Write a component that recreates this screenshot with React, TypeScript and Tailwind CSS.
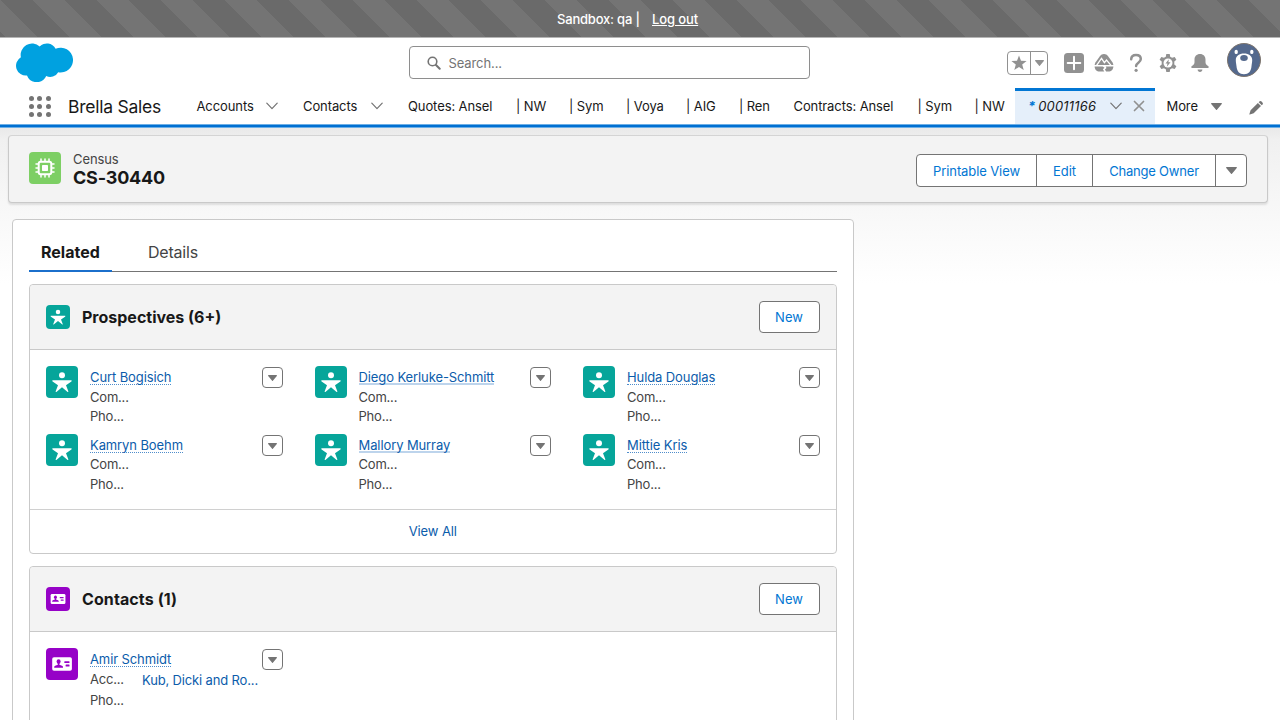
import React from "react";

function Caret({ className }: { className: string }) {
  return (
    <svg viewBox="0 0 10 6" preserveAspectRatio="none" className={className} fill="currentColor">
      <path d="M.6 0h8.800c.5 0 .7.5.4.9L5.400 5.700c-.2.3-.6.3-.8 0L.2.9C-.1.500.1 0 .6 0z" />
    </svg>
  );
}

function Chevron() {
  return (
    <svg viewBox="0 0 12 8" className="h-2 w-3 shrink-0" fill="none" stroke="#747474" strokeWidth="1.2" strokeLinecap="round" strokeLinejoin="round">
      <path d="M.8 1.200 6 6.600l5.200-5.400" />
    </svg>
  );
}

function PersonGlyph({ className }: { className: string }) {
  return (
    <svg viewBox="0 0 32 32" className={className} fill="#fff">
      <circle cx="16" cy="9.2" r="3" />
      <path d="M6.900 14.300h18.200c.8 0 .9.8.3 1.200l-5.400 3.700 2.300 6c.3.700-.5 1.100-1 .6L16 21.200l-5.300 4.600c-.5.500-1.300.1-1-.6l2.300-6-5.400-3.700c-.6-.4-.5-1.200.3-1.200z" />
    </svg>
  );
}

function CardGlyph({ className }: { className: string }) {
  return (
    <svg viewBox="0 0 32 32" className={className}>
      <rect x="6.2" y="9.2" width="19.7" height="13.6" rx="1.8" fill="#fff" />
      <g fill="#9602c7">
        <ellipse cx="12.6" cy="13.6" rx="2" ry="2.3" />
        <path d="M11.800 15h1.600v1.700l2.600 1c.7.300 1 .8 1 1.400v.6H8.200v-.6c0-.6.300-1.100 1-1.400l2.600-1z" />
        <rect x="18.3" y="13.2" width="5.2" height="1.8" rx=".5" />
        <rect x="19.6" y="16.6" width="3.9" height="1.8" rx=".5" />
      </g>
    </svg>
  );
}

function RowMenu() {
  return (
    <button className="flex h-[21px] w-[21px] shrink-0 items-center justify-center rounded-[4px] border border-[#747474] bg-white text-[#747474]">
      <Caret className="h-[6px] w-[9px]" />
    </button>
  );
}

type RecordProps = { name: string; second: string; lines: string; account?: string; contact?: boolean; solid?: boolean };

function RecordTile({ name, second, lines, account, contact, solid }: RecordProps) {
  return (
    <div className="flex min-w-0 items-start">
      <span className={`h-8 w-8 shrink-0 rounded-[4px] ${contact ? "bg-[#9602c7]" : "bg-[#06a59a]"}`}>
        {contact ? <CardGlyph className="h-8 w-8" /> : <PersonGlyph className="h-8 w-8" />}
      </span>
      <div className="ml-3 flex min-w-0 flex-1 flex-col pt-1">
        <a className={`w-fit leading-[14px] whitespace-nowrap text-[#0b5cab] ${solid ? "h-[15px] border-b-2 border-[#bdd4ec]" : "h-[15px] border-b border-dotted border-[#4f8dcb]"}`}>{name}</a>
        <div className={`flex flex-col tracking-[-0.2px] ${lines}`}>
          <div className="flex leading-[19px]">
            <span className="w-[52px]">{second}</span>
            {account && <a className="relative top-px tracking-[-0.15px] whitespace-nowrap text-[#0b5cab]">{account}</a>}
          </div>
          <div className="leading-[19px]">Pho...</div>
        </div>
      </div>
      <div className="pt-px">
        <RowMenu />
      </div>
    </div>
  );
}

function ListHeader({ title, contact }: { title: string; contact?: boolean }) {
  return (
    <div className="flex h-[65px] items-center rounded-t-[4px] border-b border-[#c9c9c9] bg-[#f3f3f3] px-4">
      <span className={`h-6 w-6 rounded-[4px] ${contact ? "bg-[#9602c7]" : "bg-[#06a59a]"}`}>
        {contact ? <CardGlyph className="h-6 w-6" /> : <PersonGlyph className="h-6 w-6" />}
      </span>
      <h2 className={`ml-3 flex-1 text-[16px] font-bold text-[#181818] ${contact ? "tracking-[0.1px]" : "tracking-normal"}`}>{title}</h2>
      <button className="h-8 w-[61px] rounded-[4px] border border-[#747474] bg-white pt-[2px] tracking-normal text-[#0176d3]">New</button>
    </div>
  );
}

const navItems = [
  { label: "Quotes: Ansel", box: "w-[108px]" },
  { label: "| NW", box: "w-[53px]" },
  { label: "| Sym", box: "w-[57px]" },
  { label: "| Voya", box: "w-[60px]" },
  { label: "| AIG", box: "w-[53px]" },
  { label: "| Ren", box: "w-[54.5px]" },
  { label: "Contracts: Ansel", box: "w-[124px]" },
  { label: "| Sym", box: "w-[57px]" },
  { label: "| NW", box: "w-[40.5px]" },
];

function HeaderIcons() {
  return (
    <div className="flex items-center text-[#919191]">
      <div className="flex h-6 w-[41px] rounded-[4px] border border-[#919191]">
        <span className="flex w-[23px] items-center justify-center border-r border-[#919191]">
          <svg viewBox="0 0 16 16" className="h-4 w-4" fill="currentColor">
            <path d="m8 .5 2 5.300 5.600.2-4.400 3.500 1.500 5.500L8 11.900 3.300 15l1.500-5.500L.4 6 6 5.800z" />
          </svg>
        </span>
        <span className="flex flex-1 items-center justify-center">
          <Caret className="h-[6px] w-[9px]" />
        </span>
      </div>
      <svg viewBox="0 0 20 20" className="ml-4 h-5 w-5">
        <rect width="20" height="20" rx="3.500" fill="currentColor" />
        <path d="M10 3.700v12.600M3.700 10h12.600" stroke="#fff" strokeWidth="2" strokeLinecap="round" />
      </svg>
      <svg viewBox="0 0 20 20" className="ml-[10px] h-5 w-5">
        <path d="M10 1c1.700 0 3.100.8 4.100 2.200l4.300 6.100c.5.800.8 1.600 1 2.700H.6c.2-1.100.5-1.900 1-2.700l4.300-6.100C6.900 1.800 8.300 1 10 1z" fill="currentColor" />
        <path d="M.6 13.400h8.200l1.700 1.300-1.600 1.500 1.400 2.400H5.600C2.700 18.600.7 16.500.6 13.400zM11.700 13.400h7.700c-.1 3.100-2.100 5.200-5 5.200h-2.300l-1.200-2.200 1.600-1.500z" fill="currentColor" />
        <path d="m2.600 12.300 4.900-7 2.900 4.400 2.100-2.700 4.500 5.300" fill="none" stroke="#fff" strokeWidth="1.300" />
      </svg>
      <svg viewBox="0 0 14 20" className="ml-[15px] h-5 w-[14px]" fill="none">
        <path d="M2.200 6.300C2.300 3.400 4.200 2 7 2c2.900 0 4.800 1.600 4.800 4.100 0 3.800-4.700 3.400-4.700 7" stroke="currentColor" strokeWidth="2.500" strokeLinecap="round" />
        <circle cx="7.100" cy="17.300" r="1.600" fill="currentColor" />
      </svg>
      <svg viewBox="0 0 20 20" className="ml-[15px] h-5 w-5">
        <path fill="currentColor" d="M8.300 1h3.400l.5 2.700 1.900 1.100 2.600-.9 1.700 2.900-2.100 1.800v2.800l2.100 1.800-1.700 2.900-2.600-.9-1.900 1.100-.5 2.700H8.300l-.5-2.700-1.900-1.100-2.600.9-1.700-2.900 2.100-1.800V8.600L1.600 6.800l1.700-2.900 2.600.9 1.900-1.100z" />
        <circle cx="10" cy="10" r="4.500" fill="#fff" />
        <path d="M10.800 6.300 7.500 10.400h2l-.7 3.400 3.700-4.500h-2.100z" fill="currentColor" />
      </svg>
      <svg viewBox="0 0 20 20" className="ml-3 h-5 w-5" fill="currentColor">
        <path d="M10 1c3.400 0 5.500 2.400 5.500 5.600v2.700c0 1.700.8 2.500 2.200 3.400.7.400 1 .8 1 1.300 0 .7-.4 1-1 1H2.300c-.6 0-1-.3-1-1 0-.5.300-.9 1-1.300 1.400-.9 2.200-1.700 2.200-3.400V6.600C4.500 3.400 6.600 1 10 1zM7.600 16.400h4.800c0 1.500-1 2.500-2.400 2.500s-2.400-1-2.400-2.500z" />
      </svg>
    </div>
  );
}

export default function App() {
  return (
    <div className="h-[720px] w-[1280px] overflow-hidden bg-white font-['Inter',sans-serif] text-[13px] tracking-[-0.1px] text-[#444]">
      <div className="flex h-[38px] items-center border-b border-[#b5b5b5] bg-[#747474] bg-[linear-gradient(45deg,#6a6a6a_25%,#747474_25%,#747474_50%,#6a6a6a_50%,#6a6a6a_75%,#747474_75%)] bg-[length:64px_64px] pt-[2px] pl-[557px] font-medium text-white">
        <span className="w-[95px] tracking-[-0.2px]">Sandbox: qa |</span>
        <a className="underline">Log out</a>
      </div>

      <header className="bg-white">
        <div className="flex h-[50px] items-start">
          <svg viewBox="0 0 57 40" className="mt-1 ml-4 h-10 w-[57px]" fill="#00a1e0">
            <path d="M23.700 4.500a10 10 0 0 1 15.900 2.200A12.400 12.400 0 1 1 42.200 30.200a9 9 0 0 1-12 3.800 10.400 10.400 0 0 1-19.200-.5A9.800 9.800 0 0 1 4.900 15.300 11.400 11.400 0 0 1 23.700 4.500z" />
          </svg>
          <div className="mt-2 ml-[336px] flex h-[33px] w-[401px] items-center rounded-[4px] border border-[#8e8e8e] pl-[17px] text-[#747474]">
            <svg viewBox="0 0 14 14" className="mt-px h-[14px] w-[14px]" fill="none" stroke="#747474" strokeLinecap="round">
              <circle cx="5.500" cy="5.500" r="4.300" strokeWidth="1.600" />
              <path d="m9 9 3.700 3.700" strokeWidth="2" />
            </svg>
            <span className="ml-[7.5px] pt-[2px]">Search...</span>
          </div>
          <div className="mt-[13px] ml-[197px]">
            <HeaderIcons />
          </div>
          <svg viewBox="0 0 34 34" className="mt-[5px] ml-[17px] h-[34px] w-[34px]">
            <circle cx="17" cy="17" r="16.500" fill="#54698d" stroke="#7d746c" />
            <path d="M7.600 8.300a1.600 1.600 0 0 1 3.200 0v1.200a1.600 1.600 0 0 1-3.200 0zM23.200 8.300a1.600 1.600 0 0 1 3.200 0v1.200a1.600 1.600 0 0 1-3.200 0z" fill="#fff" />
            <path d="M17 10.500c4.800 0 8.200 2.600 8.200 6.400 0 2.300-.5 4.200-.7 6.400-.4 5-2.900 8-7.500 8s-7.100-3-7.500-8c-.2-2.200-.7-4.100-.7-6.400 0-3.800 3.400-6.400 8.200-6.400z" fill="#fff" />
            <ellipse cx="17" cy="15" rx="3.800" ry="2.900" fill="#54698d" />
          </svg>
        </div>

        <nav className="flex h-[36px] items-center text-[#181818]">
          <div className="ml-[29px] grid w-[22px] grid-cols-3 gap-[3px]">
            {Array.from({ length: 9 }, (_, i) => (
              <span key={i} className="h-[5px] w-[5px] rounded-full bg-[#747474]" />
            ))}
          </div>
          <span className="ml-[17px] w-[128.500px] pt-[2px] text-[17.500px] tracking-[-0.250px] whitespace-nowrap">Brella Sales</span>
          <span className="w-[69.500px] pt-[2px]">Accounts</span>
          <Chevron />
          <span className="ml-[25px] w-[68px] pt-[2px]">Contacts</span>
          <Chevron />
          <div className="ml-[25px] flex pt-[2px]">
            {navItems.map((n, i) => (
              <span key={i} className={`whitespace-nowrap ${n.box}`}>{n.label}</span>
            ))}
          </div>
          <div className="flex h-full w-[139.500px] shrink-0 items-center border-t-[3px] border-[#0176d3] bg-[#e5effa] pb-[3px] pl-[13px]">
            <span className="pt-[2px] font-bold text-[#0176d3] italic">*</span>
            <span className="ml-[3px] w-[71.500px] pt-[2px] tracking-[0.200px] italic">00011166</span>
            <Chevron />
            <svg viewBox="0 0 12 12" className="ml-[11px] h-3 w-3" stroke="#919191" strokeWidth="1.700" strokeLinecap="round">
              <path d="m1.500 1.500 9 9M10.500 1.500l-9 9" />
            </svg>
          </div>
          <span className="ml-[12px] w-[44px] pt-[2px]">More</span>
          <Caret className="h-[7px] w-[11px] text-[#747474]" />
          <svg viewBox="0 0 14 14" className="mt-1 ml-[27px] h-[14px] w-[14px]" fill="#747474">
            <path d="m9.700 1.200.6-.6c.7-.7 1.600-.7 2.300 0l.8.8c.7.700.7 1.600 0 2.300l-.6.600zM8.900 2l3.100 3.100-7.300 7.200-3.900 1.200c-.3.100-.5-.1-.4-.4l1.200-3.900z" />
          </svg>
        </nav>
        <div className="h-1 border-y border-[#6dafe6] bg-[#0070d2]" />
      </header>

      <main className="h-[592px] bg-[linear-gradient(to_bottom,#e9e9e9_0px,#f0f0f0_12px,#f6f6f6_65px,#ffffff_155px)] px-2 pt-[7px]">
        <section className="flex h-[68px] w-[1260px] items-center rounded-[4px] border border-[#c9c9c9] border-t-[#d4d4d4] bg-[#f3f3f3] px-5 shadow-[0_2px_2px_rgba(0,0,0,0.1)]">
          <svg viewBox="0 0 32 32" className="mb-[3px] h-8 w-8">
            <rect width="32" height="32" rx="4" fill="#7dcf64" />
            <g fill="none" stroke="#fff">
              <rect x="9.700" y="9.700" width="12.600" height="12.600" rx="2" strokeWidth="2" />
              <path strokeWidth="1.500" strokeLinecap="round" d="M12 7v2M16 7v2M20 7v2M12 23v2M16 23v2M20 23v2M7 12h2M7 16h2M7 20h2M23 12h2M23 16h2M23 20h2" />
            </g>
            <rect x="13" y="13" width="6" height="6" rx=".7" fill="#fff" />
          </svg>
          <div className="ml-3 flex-1">
            <div className="leading-[17px]">Census</div>
            <h1 className="text-[18px] leading-[19px] font-bold tracking-[-0.220px] text-[#181818]">CS-30440</h1>
          </div>
          <div className="mt-[3px] flex h-[33px] rounded-[4px] border border-[#747474] bg-white text-[#0176d3]">
            <button className="w-[120px] border-r border-[#747474] pt-[2px]">Printable View</button>
            <button className="w-[56px] border-r border-[#747474] pt-[2px]">Edit</button>
            <button className="w-[123px] border-r border-[#747474] pt-[2px] tracking-[-0.200px]">Change Owner</button>
            <button className="flex w-[30px] items-center justify-center text-[#747474]">
              <Caret className="h-[7px] w-[11px]" />
            </button>
          </div>
        </section>

        <section className="mt-4 ml-1 h-[540px] w-[841.500px] rounded-[4px] border border-[#c9c9c9] bg-white px-4 pt-[15px]">
          <div className="flex h-[37px] border-b border-[#747474] text-[16px]">
            <div className="h-[37px] w-[83px] border-b-2 border-[#1b6fcb] pt-[5px] pl-3 font-bold tracking-normal text-[#181818]">Related</div>
            <div className="pt-[5px] pl-9 tracking-[-0.200px]">Details</div>
          </div>

          <div className="mt-3 h-[270px] rounded-[4px] border border-[#c9c9c9]">
            <ListHeader title="Prospectives (6+)" />
            <div className="h-[159px] px-4 pt-4">
              <div className="grid h-[68px] grid-cols-3 gap-x-8">
                <RecordTile name="Curt Bogisich" second="Com..." lines="pt-[3px]" />
                <RecordTile name="Diego Kerluke-Schmitt" second="Com..." lines="pt-[3px]" solid />
                <RecordTile name="Hulda Douglas" second="Com..." lines="pt-[3px]" />
              </div>
              <div className="grid h-[68px] grid-cols-3 gap-x-8">
                <RecordTile name="Kamryn Boehm" second="Com..." lines="pt-[2px] gap-y-px" />
                <RecordTile name="Mallory Murray" second="Com..." lines="pt-[2px] gap-y-px" solid />
                <RecordTile name="Mittie Kris" second="Com..." lines="pt-[2px] gap-y-px" />
              </div>
            </div>
            <a className="flex h-[44px] items-center justify-center border-t border-[#d0d0d0] text-[#0b5cab]">View All</a>
          </div>

          <div className="mt-3 h-[270px] rounded-[4px] border border-[#c9c9c9]">
            <ListHeader title="Contacts (1)" contact />
            <div className="grid grid-cols-3 gap-x-8 px-4 pt-4">
              <RecordTile name="Amir Schmidt" second="Acc..." account="Kub, Dicki and Ro..." lines="pt-[3px] gap-y-[2px]" contact />
            </div>
          </div>
        </section>
      </main>
    </div>
  );
}
